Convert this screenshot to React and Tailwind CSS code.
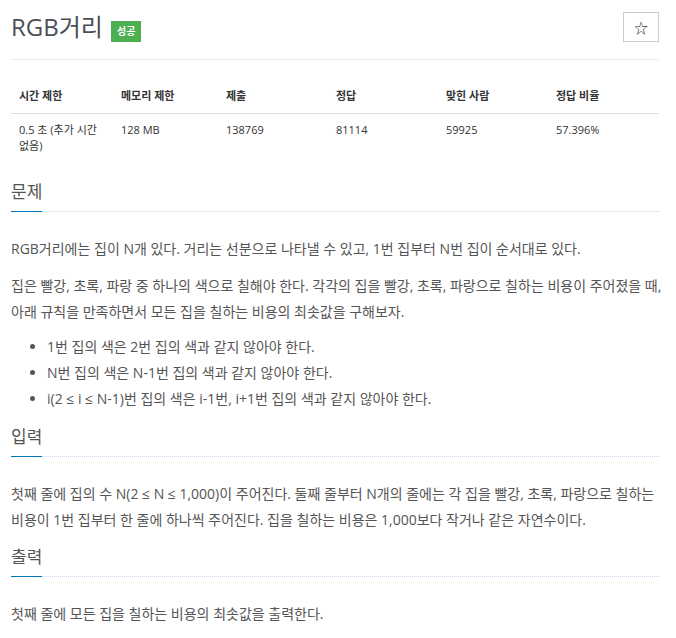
import React from "react";

const font = { fontFamily: '"Open Sans", "Noto Sans CJK KR", sans-serif' };

const stats = [
  { label: "시간 제한", value: "0.5 초 (추가 시간 없음)", w: "w-[102px]" },
  { label: "메모리 제한", value: "128 MB", w: "w-[105px]" },
  { label: "제출", value: "138769", w: "w-[110px]" },
  { label: "정답", value: "81114", w: "w-[110px]" },
  { label: "맞힌 사람", value: "59925", w: "w-[110px]" },
  { label: "정답 비율", value: "57.396%", w: "" },
];

const Headline = ({ children }) => (
  <div className="border-b border-dotted border-[#c5d7ea] flex">
    <h2 className="text-[17px] text-[#555] leading-[26px] pb-[6px] border-b border-[#0076c0] -mb-px">
      {children}
    </h2>
  </div>
);

export default function App() {
  return (
    <div
      className="w-[676px] min-h-[638px] bg-white pl-[11px] pr-[17px] text-[#555] text-[14px]"
      style={font}
    >
      {/* 제목 */}
      <div className="flex items-center justify-between pt-[12px] pb-[17px] border-b border-[#eee]">
        <div className="flex items-center gap-[8px]">
          <h1 className="text-[24px] leading-[30px] text-[#4a4f57]">RGB거리</h1>
          <span className="bg-[#4caf50] text-white text-[10px] font-bold px-[6px] h-[21px] leading-[21px] mt-[8px]">
            성공
          </span>
        </div>
        <button className="w-[36px] h-[30px] border border-[#ccc] text-[#333] text-[14px] flex items-center justify-center">
          ☆
        </button>
      </div>

      {/* 정보 표 */}
      <table className="w-full mt-[20px] text-[11px] border-collapse">
        <thead>
          <tr className="border-b border-[#ddd]">
            {stats.map((s) => (
              <th key={s.label} className={`${s.w} text-left font-bold text-[#333] px-[8px] pt-[8px] pb-[8px] align-bottom`}>
                {s.label}
              </th>
            ))}
          </tr>
        </thead>
        <tbody>
          <tr>
            {stats.map((s) => (
              <td key={s.label} className="text-left align-top px-[8px] pt-[8px] leading-[16px] text-[#333]">
                {s.value}
              </td>
            ))}
          </tr>
        </tbody>
      </table>

      {/* 문제 */}
      <section className="mt-[25px]">
        <Headline>문제</Headline>
        <div className="pt-[24px] leading-[26px] -mr-[10px]">
          <p className="mb-[11px]">
            RGB거리에는 집이 N개 있다. 거리는 선분으로 나타낼 수 있고, 1번 집부터 N번 집이 순서대로 있다.
          </p>
          <p className="mb-[9px]">
            집은 빨강, 초록, 파랑 중 하나의 색으로 칠해야 한다. 각각의 집을 빨강, 초록, 파랑으로 칠하는 비용이 주어졌을 때, 아래 규칙을 만족하면서 모든 집을 칠하는 비용의 최솟값을 구해보자.
          </p>
          <ul className="list-disc pl-[36px]">
            <li>1번 집의 색은 2번 집의 색과 같지 않아야 한다.</li>
            <li>N번 집의 색은 N-1번 집의 색과 같지 않아야 한다.</li>
            <li>i(2 ≤ i ≤ N-1)번 집의 색은 i-1번, i+1번 집의 색과 같지 않아야 한다.</li>
          </ul>
        </div>
      </section>

      {/* 입력 */}
      <section className="mt-[12px]">
        <Headline>입력</Headline>
        <div className="pt-[24px] leading-[26px]">
          <p>
            첫째 줄에 집의 수 N(2 ≤ N ≤ 1,000)이 주어진다. 둘째 줄부터 N개의 줄에는 각 집을 빨강, 초록, 파랑으로 칠하는 비용이 1번 집부터 한 줄에 하나씩 주어진다. 집을 칠하는 비용은 1,000보다 작거나 같은 자연수이다.
          </p>
        </div>
      </section>

      {/* 출력 */}
      <section className="mt-[11px]">
        <Headline>출력</Headline>
        <div className="pt-[24px] leading-[26px]">
          <p>첫째 줄에 모든 집을 칠하는 비용의 최솟값을 출력한다.</p>
        </div>
      </section>
    </div>
  );
}
